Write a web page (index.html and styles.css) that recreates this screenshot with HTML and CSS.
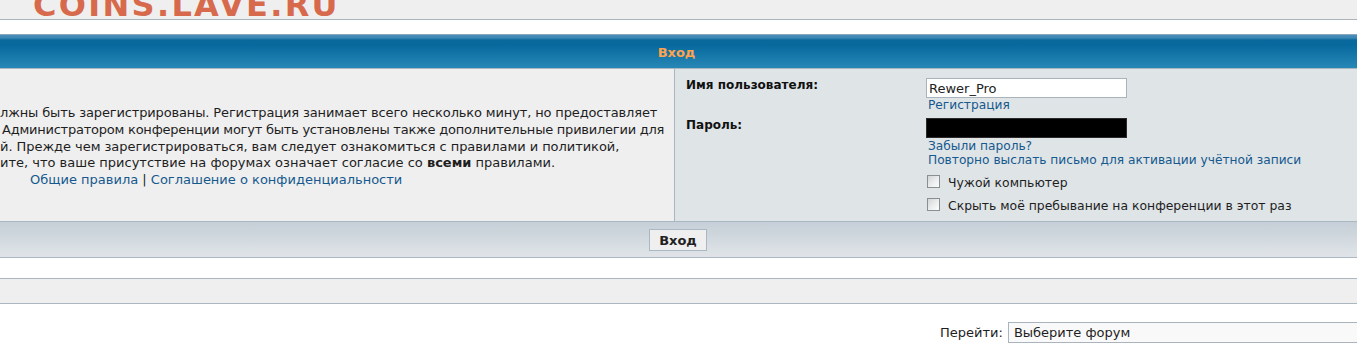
FILE: index.html
```html
<!DOCTYPE html>
<html lang="ru">
<head>
<meta charset="utf-8">
<title>COINS.LAVE.RU — Вход</title>
<link rel="stylesheet" href="styles.css">
</head>
<body>
<div class="header"><div class="logo">COINS.LAVE.RU</div></div>
<div class="gap-top"></div>
<div class="cat-head">Вход</div>
<div class="login-row">
  <div class="intro">
    <div class="intro-text">
      <div class="ln ln-1">лжны быть зарегистрированы. Регистрация занимает всего несколько минут, но предоставляет</div>
      <div class="ln ln-2">Администратором конференции могут быть установлены также дополнительные привилегии для</div>
      <div class="ln ln-3">й. Прежде чем зарегистрироваться, вам следует ознакомиться с правилами и политикой,</div>
      <div class="ln">ите, что ваше присутствие на форумах означает согласие со <b>всеми</b> правилами.</div>
      <div class="ln ln-links"><a href="#">Общие правила</a> | <a href="#">Соглашение о конфиденциальности</a></div>
    </div>
  </div>
  <div class="form">
    <div class="frow">
      <div class="flabel">Имя пользователя:</div>
      <div class="ffield">
        <input class="txt" type="text" value="Rewer_Pro">
        <a class="flink" href="#">Регистрация</a>
      </div>
    </div>
    <div class="frow frow-pass">
      <div class="flabel">Пароль:</div>
      <div class="ffield">
        <input class="txt txt-pass" type="password" value="">
        <a class="flink flink-first" href="#">Забыли пароль?</a>
        <a class="flink" href="#">Повторно выслать письмо для активации учётной записи</a>
        <label class="chk chk-first"><input type="checkbox"><span>Чужой компьютер</span></label>
        <label class="chk"><input type="checkbox"><span>Скрыть моё пребывание на конференции в этот раз</span></label>
      </div>
    </div>
  </div>
</div>
<div class="cat-bottom"><button class="btn" type="button">Вход</button></div>
<div class="gap-mid"></div>
<div class="band"></div>
<div class="jump">
  <span class="jump-label">Перейти:</span>
  <div class="jump-select">Выберите форум</div>
</div>
</body>
</html>
```

FILE: styles.css
```css
html, body {
  margin: 0;
  padding: 0;
  overflow: hidden;
  background: #ffffff;
}
body {
  font-family: "DejaVu Sans", Verdana, sans-serif;
  font-size: 13px;
  color: #1e1e1e;
  width: 1357px;
  height: 353px;
}
a {
  color: #15598e;
  text-decoration: none;
}

.header {
  height: 19px;
  background: #efefef;
  border-bottom: 1px solid #aab4bd;
  overflow: hidden;
}
.logo {
  margin-top: -11px;
  padding-left: 33px;
  font-size: 32px;
  line-height: 32px;
  font-weight: bold;
  letter-spacing: 2.3px;
  color: #d76a4c;
  white-space: nowrap;
}
.gap-top {
  height: 14px;
}
.cat-head {
  box-sizing: border-box;
  height: 35px;
  border-top: 1px solid #8aa6bb;
  border-bottom: 1px solid #aab6c0;
  background: linear-gradient(to bottom, #4b8fbb 0, #3a86b4 3px, #0a689c 5px, #07699d 10px, #2788b7 100%);
  color: #ffa34f;
  font-weight: bold;
  text-align: center;
  line-height: 33px;
  padding-top: 1px;
  padding-right: 4px;
}

.login-row {
  display: flex;
  height: 152px;
}
.intro {
  width: 675px;
  flex: none;
  background: #efefef;
  border-right: 1px solid #aab7c0;
  display: flex;
  align-items: center;
  overflow: hidden;
  padding-top: 4px;
  box-sizing: border-box;
}
.intro-text {
  line-height: 16.67px;
}
.ln {
  white-space: nowrap;
}
.ln-1 {
  letter-spacing: -0.14px;
}
.ln-2 {
  padding-left: 2px;
  letter-spacing: -0.23px;
}
.ln-3 {
  letter-spacing: -0.05px;
}
.ln-links {
  padding-left: 30px;
}

.form {
  flex: 1;
  background: #dfe4e7;
  padding: 9px 0 0 11px;
}
.frow {
  display: grid;
  grid-template-columns: 240px 1fr;
}
.frow-pass {
  margin-top: 6px;
}
.flabel {
  font-weight: bold;
  font-size: 12px;
  color: #111;
  line-height: 14px;
}
.ffield {
  display: flex;
  flex-direction: column;
  align-items: flex-start;
}
.txt {
  display: block;
  box-sizing: border-box;
  width: 201px;
  height: 20px;
  margin: 0;
  padding: 0 2px;
  border: 1px solid #a9b3bc;
  background: #ffffff;
  font-family: "DejaVu Sans", Verdana, sans-serif;
  font-size: 13px;
  color: #222;
  outline: none;
}
.txt-pass {
  background: #000000;
  border-color: #2a2a2a;
}
.flink {
  display: block;
  font-size: 12.2px;
  line-height: 14px;
  padding-left: 2px;
}
.flink-first {
  margin-top: 1px;
}
.chk {
  display: flex;
  align-items: flex-start;
  gap: 8px;
  font-size: 12.4px;
  line-height: 16px;
  margin-top: 7px;
  padding-left: 1px;
  color: #1e1e1e;
}
.chk-first {
  margin-top: 8px;
}
.chk input {
  appearance: none;
  -webkit-appearance: none;
  width: 13px;
  height: 13px;
  margin: 0;
  border: 1px solid #8c8f91;
  background: linear-gradient(135deg, #d2d4d6 0%, #eceeef 55%, #fdfdfd 100%);
  box-sizing: border-box;
  flex: none;
}

.cat-bottom {
  height: 28px;
  padding-top: 7px;
  border-top: 1px solid #a9b8c2;
  border-bottom: 1px solid #a9b8c2;
  background: linear-gradient(to bottom, #c6cfd7 0, #cdd5dc 30%, #dde2e6 88%, #e0e4e8 100%);
  display: flex;
  justify-content: center;
  align-items: flex-start;
}
.btn {
  width: 58px;
  height: 22px;
  margin: 0 0 0 -1px;
  padding: 0;
  border: 1px solid #a9b8c2;
  background: #efefef;
  font-family: "DejaVu Sans", Verdana, sans-serif;
  font-size: 13px;
  font-weight: bold;
  color: #222;
  box-sizing: border-box;
}
.gap-mid {
  height: 20px;
}
.band {
  height: 24px;
  background: #efefef;
  border-top: 1px solid #aab6c0;
  border-bottom: 1px solid #aab6c0;
}
.jump {
  display: flex;
  align-items: center;
  margin-top: 18px;
  padding-left: 940px;
  gap: 5px;
  white-space: nowrap;
}
.jump-label {
  color: #1e1e1e;
}
.jump-select {
  flex: none;
  width: 420px;
  height: 21px;
  line-height: 19px;
  box-sizing: border-box;
  border: 1px solid #aab4be;
  background: #f9f9f9;
  padding-left: 5px;
  color: #1e1e1e;
}
```
